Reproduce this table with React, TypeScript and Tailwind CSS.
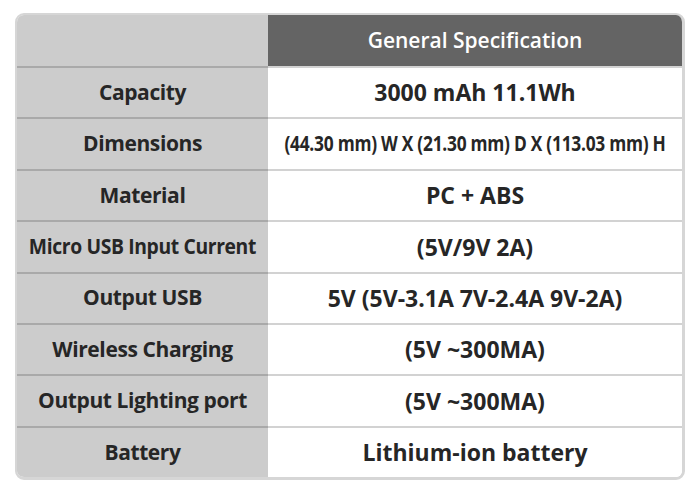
const rows: [string, string][] = [
  ['Capacity', '3000 mAh 11.1Wh'],
  ['Dimensions', '(44.30 mm) W X (21.30 mm) D X (113.03 mm) H'],
  ['Material', 'PC + ABS'],
  ['Micro USB Input Current', '(5V/9V 2A)'],
  ['Output USB', '5V (5V-3.1A 7V-2.4A 9V-2A)'],
  ['Wireless Charging', '(5V ~300MA)'],
  ['Output Lighting port', '(5V ~300MA)'],
  ['Battery', 'Lithium-ion battery'],
];

export default function App() {
  return (
    <div className="w-[700px] h-[492px] bg-white pt-[13px] pl-[15px] font-['Open_Sans',sans-serif]">
      <div className="w-[670px] h-[467px] rounded-[9px] border-t-2 border-l-2 border-r-[3px] border-b-[3px] border-[#d6d6d6] overflow-hidden flex flex-col">
        {/* header */}
        <div className="flex h-[51px] shrink-0">
          <div className="w-[251px] shrink-0 bg-[#cccccc]" />
          <div className="flex-1 min-w-0 bg-[#646464] flex items-center justify-center text-white text-[21px] font-semibold">
            General Specification
          </div>
        </div>
        {rows.map(([label, value], i) => (
          <div key={label} className="flex flex-1">
            <div className="w-[251px] shrink-0 bg-[#cccccc] border-t-2 border-[#a9a9a9] flex items-center justify-center text-[#262626] text-[21px] font-bold tracking-[-0.4px] whitespace-nowrap">
              <span className={i === 3 ? 'inline-block scale-x-[0.92]' : 'inline-block'}>{label}</span>
            </div>
            <div className="flex-1 min-w-0 bg-white border-t-2 border-[#d2d2d2] flex items-center justify-center text-[#262626] whitespace-nowrap">
              <span
                className={
                  i === 1
                    ? 'inline-block shrink-0 text-[21px] font-bold tracking-[-0.3px] scale-x-[0.825]'
                    : 'inline-block text-[23px] font-bold'
                }
              >
                {value}
              </span>
            </div>
          </div>
        ))}
      </div>
    </div>
  );
}
